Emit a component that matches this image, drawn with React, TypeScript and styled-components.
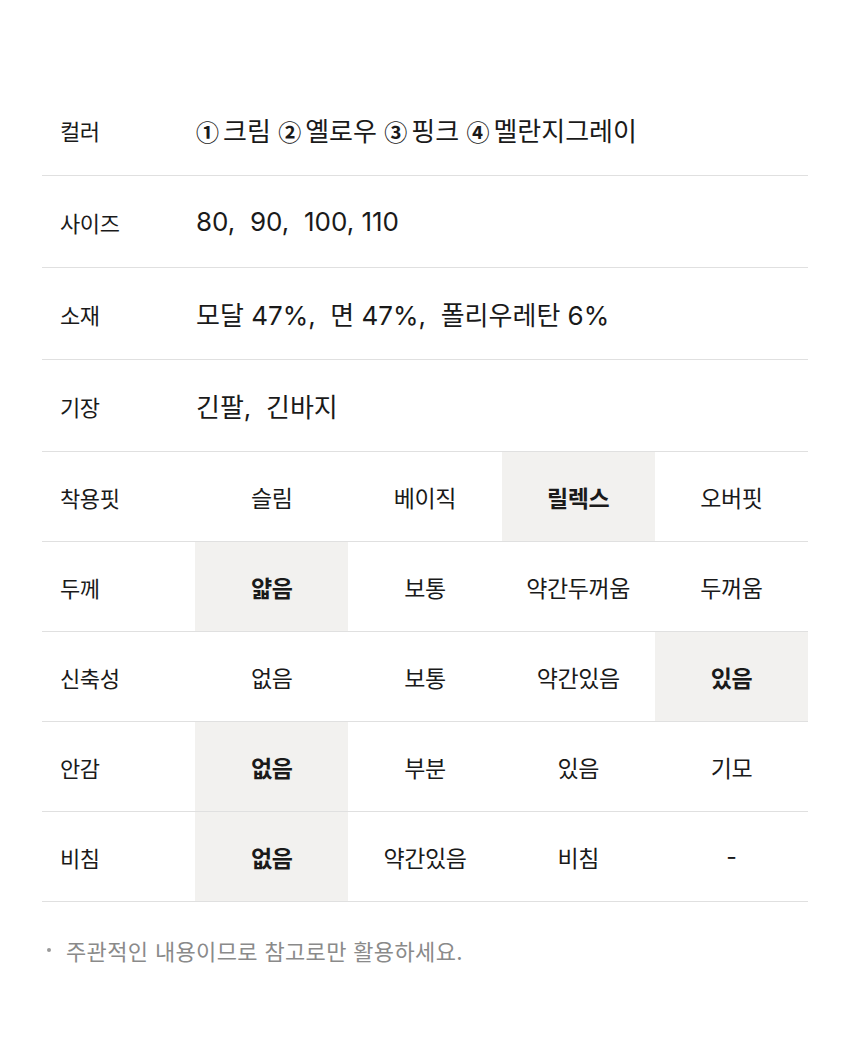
import styled, { createGlobalStyle } from 'styled-components';

const GlobalStyle = createGlobalStyle`
  body {
    margin: 0;
    background: #ffffff;
    font-family: Inter, "Noto Sans CJK KR", sans-serif;
    color: #1a1a1a;
  }
`;

const Page = styled.div`
  padding: 84px 42px 0;
  height: 1063px;
  box-sizing: border-box;
`;

const Table = styled.div`
  display: flex;
  flex-direction: column;
`;

const InfoRow = styled.div`
  display: grid;
  grid-template-columns: 152px 1fr;
  align-items: center;
  height: 92px;
  border-bottom: 1px solid #e0e0e0;
  box-sizing: border-box;
`;

const Label = styled.div`
  padding-left: 18px;
  font-size: 22px;
  letter-spacing: -0.4px;
`;

const Value = styled.div`
  padding-left: 2px;
  font-size: 26px;
  white-space: pre;
`;

const Circle = styled.span`
  font-family: "Noto Sans CJK KR", sans-serif;
  font-size: 23px;
  font-weight: 700;
  margin-right: 4px;
`;

const GridRow = styled.div`
  display: grid;
  grid-template-columns: repeat(5, 1fr);
  height: 90px;
  border-bottom: 1px solid #e0e0e0;
  box-sizing: border-box;
`;

const GridLabel = styled(Label)`
  display: flex;
  align-items: center;
`;

const Cell = styled.div<{ $active?: boolean }>`
  display: flex;
  align-items: center;
  justify-content: center;
  font-size: 23px;
  letter-spacing: -0.4px;
  background: ${({ $active }) => ($active ? '#f2f1ef' : 'transparent')};
  font-weight: ${({ $active }) => ($active ? 700 : 400)};
`;

const Note = styled.div`
  display: flex;
  align-items: center;
  gap: 15px;
  margin-top: 32px;
  padding-left: 5px;
  font-size: 22px;
  letter-spacing: 0.35px;
  color: #8a8a8a;
`;

const Dot = styled.span`
  width: 4px;
  height: 4px;
  border-radius: 50%;
  background: #9a9a9a;
`;

const colors = ['크림', '옐로우', '핑크', '멜란지그레이'];
const marks = ['①', '②', '③', '④'];

const info = [
  { label: '사이즈', value: '80,  90,  100, 110' },
  { label: '소재', value: '모달 47%,  면 47%,  폴리우레탄 6%' },
  { label: '기장', value: '긴팔,  긴바지' },
];

const grid = [
  { label: '착용핏', cells: ['슬림', '베이직', '릴렉스', '오버핏'], active: 2 },
  { label: '두께', cells: ['얇음', '보통', '약간두꺼움', '두꺼움'], active: 0 },
  { label: '신축성', cells: ['없음', '보통', '약간있음', '있음'], active: 3 },
  { label: '안감', cells: ['없음', '부분', '있음', '기모'], active: 0 },
  { label: '비침', cells: ['없음', '약간있음', '비침', '-'], active: 0 },
];

const App = () => (
  <Page>
    <GlobalStyle />
    <Table>
      <InfoRow>
        <Label>컬러</Label>
        <Value>
          {colors.map((c, i) => (
            <span key={c}>
              <Circle>{marks[i]}</Circle>
              {c}
              {i < colors.length - 1 ? ' ' : ''}
            </span>
          ))}
        </Value>
      </InfoRow>
      {info.map((row) => (
        <InfoRow key={row.label}>
          <Label>{row.label}</Label>
          <Value>{row.value}</Value>
        </InfoRow>
      ))}
      {grid.map((row) => (
        <GridRow key={row.label}>
          <GridLabel>{row.label}</GridLabel>
          {row.cells.map((c, i) => (
            <Cell key={i} $active={i === row.active}>
              {c}
            </Cell>
          ))}
        </GridRow>
      ))}
    </Table>
    <Note>
      <Dot />
      주관적인 내용이므로 참고로만 활용하세요.
    </Note>
  </Page>
);

export default App;
